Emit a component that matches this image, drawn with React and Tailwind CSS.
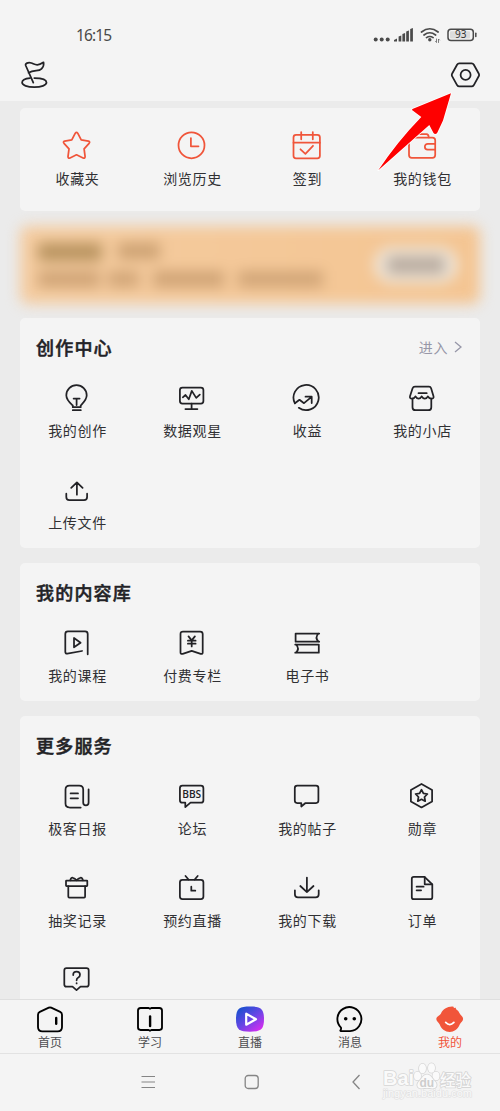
import clsx from 'clsx'

const ICONS = {
    star: <path d="M13.300 2.200q1.200-1.600 2.400 0l3.500 6.600 7.200 1.300q2 .6.7 2.200l-5 5.500 1 7.800q0 2-2 1.400l-6.600-3.200L8 27q-2 .6-2-1.400l1-7.800-5-5.500q-1.300-1.600.7-2.200L9.800 8.800z" />,
    clock: (
        <>
            <circle cx="14.500" cy="14.300" r="13" />
            <path d="M13.900 7v8.300h7.600" />
        </>
    ),
    checkin: (
        <>
            <rect x="1.500" y="3.900" width="26.400" height="23.400" rx="2.500" />
            <path d="M9.200 1v7.300M20.800 1v7.300M1.500 11.700h26.400M8.500 18.300l4.900 4.500 7.600-8" />
        </>
    ),
    wallet: (
        <>
            <path d="M28.200 12.800V9.300q0-2.800-2.800-2.800H3.500Q2 6.500 2 9v15q0 2.800 2.800 2.800h20.600q2.800 0 2.800-2.800v-5.500" />
            <path d="M28.200 12.800h-7.500a2.850 2.850 0 0 0 0 5.700h7.500zM3.500 6.500Q5 3.200 8 3.200h11.500q2 0 2.300 3.300" />
        </>
    ),
    bulb: (
        <>
            <path d="M10.800 24.200V22.500C8 20 4.300 17 4.300 12.300a10.200 10.200 0 0 1 20.400 0c0 4.700-3.700 7.700-6 10.200v1.700zM10.800 27.200h8" />
            <path d="M11.600 15.600h6M14.600 15.600V22" />
        </>
    ),
    monitor: (
        <>
            <rect x="2.900" y="4.500" width="23.500" height="16" rx="2.500" />
            <path d="M14.600 20.500V26M8.400 26h12" />
            <path d="m5.800 14.300 2.700-2.300 3.300 4.200 3-8.300 4.400 7 3.600-3.300" />
        </>
    ),
    income: (
        <>
            <path d="M2.900 20.300A12.600 12.600 0 1 1 6.800 24.800" />
            <path d="m2.900 20.300 4.600-3.500 4.500 3.400 7.600-6.400M13.500 13.700h6.200V20" />
        </>
    ),
    shop: (
        <>
            <path d="M8 3.600h14q1.600 0 2.100 1.600l2.400 8q.6 2.500-2 2.500-2.500 0-3.600-2.300-1.200 2.300-3.100 2.300T14.700 13.400q-1.200 2.300-3.100 2.300T8.500 13.400Q7.300 15.700 5 15.700q-2.600 0-2-2.500l2.600-8Q6.200 3.600 8 3.600z" />
            <path d="M5.500 15.700v8.500q0 3 3 3h12.800q3 0 3-3v-8.500M11.500 10.200h8.200" />
        </>
    ),
    upload: <path d="M14.900 19.700V7.500M9.200 12.800l5.700-5.500 5.700 5.500M4.300 18.700v3.400q0 3.100 3.100 3.100H22q3.100 0 3.100-3.100v-3.400" />,
    course: (
        <>
            <path d="M25.700 26.300V6q0-2.600-2.600-2.600H5.900q-2.600 0-2.600 2.600v17.800q0 2 2 1.800L20 23" />
            <path d="M12 10v9.300l6.600-4.600z" />
        </>
    ),
    column: (
        <>
            <path d="M6 3.500h17.200q2.500 0 2.500 2.500v18.500q0 2-2 1.300l-9-3-9 3q-2.200.7-2.200-1.300V6Q3.500 3.500 6 3.500z" />
            <path d="m11.500 8.400 3.200 4 3.200-4M14.700 12.400v6M10.900 12.700h7.700M10.900 15.700h7.700" />
        </>
    ),
    ebook: (
        <>
            <path d="M27.200 5.500H3.600v8.200h23.600M26.500 5.500q-4 4 0 8.200" />
            <path d="M3.200 16.500h23.600v8.200H3.200M4 16.500q4 4.100 0 8.200" />
        </>
    ),
    daily: (
        <>
            <path d="M18.700 26.500H7.500q-4-.2-4-4V8.500q0-4 4-4h9.700q4 0 4 4v13q0 2.900 2.700 2.900t2.700-2.900V8.300" />
            <path d="M8.600 12.400h7.400M8.600 17.300h7.400" />
        </>
    ),
    forum: (
        <>
            <path d="M5.400 4.700h18.500q2.500 0 2.500 2.500v12q0 2.500-2.500 2.500H13.500l-5.200 4.400v-4.400H5.400q-2.500 0-2.500-2.500v-12q0-2.500 2.500-2.500z" />
            <text x="5.200" y="17.300" textLength="19" lengthAdjust="spacingAndGlyphs" fontSize="11" fontWeight="600" fontFamily="Open Sans, sans-serif" fill="currentColor" stroke="none">BBS</text>
        </>
    ),
    post: <path d="M5.200 4.500H24q2.400 0 2.400 2.400v12.700q0 2.400-2.400 2.400H13.500l-4.200 3.500V22H5.200q-2.400 0-2.400-2.400V6.900q0-2.400 2.400-2.400z" />,
    medal: (
        <>
            <path d="m14.500 3 10.600 5.900v11.600l-10.600 5.900L3.900 20.500V8.900z" />
            <path d="m14.500 8.700 1.900 3.700 4 .6-2.900 3 .7 4.200-3.700-1.900-3.700 1.900.7-4.200-2.900-3 4-.6z" />
        </>
    ),
    gift: (
        <>
            <rect x="4" y="7.600" width="21.300" height="5.400" rx="0.500" />
            <path d="M6.300 13v10.500q0 1 1 1h14.800q1 0 1-1V13M8.300 7.300q.7-3 2.600-2.500 2 .4 3.700 2.500 1.700-2.100 3.700-2.500 1.900-.5 2.600 2.500" />
        </>
    ),
    tv: (
        <>
            <rect x="2.900" y="6.800" width="23.500" height="19.300" rx="2.500" />
            <path d="m8.500 3 3 3.500M20.700 3l-3 3.500M14.300 13.700v4h4" />
        </>
    ),
    download: <path d="M14.900 4.500V19M8.300 13l6.600 6.200 6.600-6.200M2.900 17.300v3.900q0 3.100 3.100 3.100h17.600q3.100 0 3.100-3.100v-3.900" />,
    order: (
        <>
            <path d="M17.500 3.800H6.800q-2 0-2 2v18.400q0 2 2 2h16.500q2 0 2-2V11.400z" />
            <path d="M17.700 4v7.300h7.500M9.600 13.700h7M9.600 17.300h4.500" />
        </>
    ),
    help: (
        <>
            <path d="M4.500 3.200h20q2.200 0 2.200 2.200v14q0 2.200-2.200 2.200h-6l-4 3.500-4-3.500h-6q-2.200 0-2.200-2.200v-14q0-2.200 2.200-2.200z" />
            <path d="M11.200 10q0-3.300 3.400-3.300T18 9.700q0 1.800-1.700 2.900-1.700 1-1.700 2.700M14.600 18v.4" />
        </>
    ),
}

const SHORTCUTS = [
    { icon: 'star', label: '收藏夹' },
    { icon: 'clock', label: '浏览历史' },
    { icon: 'checkin', label: '签到' },
    { icon: 'wallet', label: '我的钱包' },
]

const SECTIONS = [
    {
        title: '创作中心',
        more: '进入',
        items: [
            { icon: 'bulb', label: '我的创作' },
            { icon: 'monitor', label: '数据观星' },
            { icon: 'income', label: '收益' },
            { icon: 'shop', label: '我的小店' },
            { icon: 'upload', label: '上传文件' },
        ],
    },
    {
        title: '我的内容库',
        items: [
            { icon: 'course', label: '我的课程' },
            { icon: 'column', label: '付费专栏' },
            { icon: 'ebook', label: '电子书' },
        ],
    },
    {
        title: '更多服务',
        items: [
            { icon: 'daily', label: '极客日报' },
            { icon: 'forum', label: '论坛' },
            { icon: 'post', label: '我的帖子' },
            { icon: 'medal', label: '勋章' },
            { icon: 'gift', label: '抽奖记录' },
            { icon: 'tv', label: '预约直播' },
            { icon: 'download', label: '我的下载' },
            { icon: 'order', label: '订单' },
            { icon: 'help', label: '' },
        ],
    },
]

const TABS = [
    {
        label: '首页',
        icon: (
            <>
                <path d="M13.800 3.700 4.800 7.900Q3 8.800 3 10.800V23q0 4.400 4.400 4.400h15.200q4.400 0 4.400-4.400V10.800q0-2-1.800-2.900l-9-4.200q-1.200-.5-2.400 0z" />
                <path d="M21.200 14v5.700" strokeWidth="2.400" />
            </>
        ),
    },
    {
        label: '学习',
        icon: (
            <>
                <path d="M5.600 4h8l1.400.8 1.400-.8h8q2.600 0 2.600 2.600v17q0 2.400-2.600 2.400h-8l-1.400.8-1.400-.8h-8Q3 26 3 23.600v-17Q3 4 5.600 4z" />
                <path d="M15.100 12.500v9.500" strokeWidth="2.400" />
            </>
        ),
    },
    {
        label: '直播',
        icon: (
            <>
                <defs>
                    <linearGradient id="live" x1="0.100" y1="0.100" x2="0.850" y2="1">
                        <stop offset="0" stopColor="#1b50cf" />
                        <stop offset="0.500" stopColor="#6a45e6" />
                        <stop offset="1" stopColor="#dd2bf0" />
                    </linearGradient>
                </defs>
                <path d="M15 2.500c10.500 0 14 1.800 14 12.600s-3.500 12.600-14 12.600S1 26 1 15.100 4.500 2.500 15 2.500z" fill="url(#live)" stroke="none" />
                <path d="M11.200 9.700v11l9.800-5.500z" stroke="#fff" strokeWidth="2.200" />
            </>
        ),
    },
    {
        label: '消息',
        icon: (
            <>
                <path d="M6 23.700A12 12 0 1 1 15 27.100H5.800q-.8-.2-.3-.9.800-1 .5-2.500z" />
                <circle cx="10.700" cy="14.700" r="1.800" fill="currentColor" stroke="none" />
                <circle cx="19.300" cy="14.700" r="1.800" fill="currentColor" stroke="none" />
            </>
        ),
    },
    {
        label: '我的',
        active: true,
        icon: (
            <>
                <path d="M6 9.500C7.500 5.200 12.500 2.200 17.500 2.400l1.500.5-.5 1.200 2.500-.3-.2 1.200q3 1.800 3.900 4.500c1.200 2 3.400 3.200 3.400 5.500s-2.300 3.200-3.400 5.500C22.800 25.200 19 28 14.700 28S6.500 25.200 4.700 20.500C3.600 18.200 1.300 17.300 1.300 15S4.800 11.500 6 9.500z" fill="currentColor" stroke="none" />
                <path d="M10.700 18.400q4 4.400 8.200 0" stroke="#fff" strokeWidth="1.800" />
            </>
        ),
    },
]

function LineIcon({ children, className }) {
    return (
        <svg
            viewBox="0 0 30 30"
            className={clsx('w-[30px] h-[30px] shrink-0', className)}
            fill="none"
            stroke="currentColor"
            strokeWidth="1.750"
            strokeLinecap="round"
            strokeLinejoin="round"
        >
            {children}
        </svg>
    )
}

function IconGrid({ items, iconClass }) {
    return (
        <div className="grid grid-cols-4 gap-y-[34px]">
            {items.map((item) => (
                <div key={item.icon} className="flex flex-col items-center">
                    <LineIcon className={clsx('mr-px', iconClass)}>{ICONS[item.icon]}</LineIcon>
                    <span className="mt-[7px] mb-px h-5 text-[14px] leading-5 tracking-[0.65px] text-[#303033] whitespace-nowrap">
                        {item.label}
                    </span>
                </div>
            ))}
        </div>
    )
}

function Section({ title, more, items }) {
    return (
        <section className="mt-[15px] rounded-[5px] bg-[#f4f4f4] pt-[15px] pb-[15px]">
            <div className="flex items-center justify-between h-7 pl-4 pr-[18px] mb-[22px]">
                <h2 className="text-[18px] leading-7 tracking-[1.2px] font-medium [-webkit-text-stroke:0.5px_#222226] text-[#222226]">{title}</h2>
                {more && (
                    <span className="flex items-center gap-1.5 text-[14px] tracking-[0.6px] text-[#9797a8]">
                        {more}
                        <svg viewBox="0 0 8 12" className="w-2 h-3" fill="none" stroke="currentColor" strokeWidth="1.300">
                            <path d="m1 1 6 5-6 5" />
                        </svg>
                    </span>
                )}
            </div>
            <IconGrid items={items} iconClass="text-[#222226]" />
        </section>
    )
}

function StatusBar() {
    return (
        <div className="flex items-center justify-between h-[50px] pt-5 pl-[76px] pr-[22px]">
            <span className="font-['Noto_Sans'] text-[15.5px] leading-[30px] tracking-[-0.9px] text-[#4a4a4a]">16:15</span>
            <svg viewBox="0 0 106 20" className="w-[106px] h-5" fill="none" stroke="#4a4a4a" strokeLinecap="round">
                <g fill="#4a4a4a" stroke="none">
                    <circle cx="3.700" cy="14.500" r="2" />
                    <circle cx="9.700" cy="14.500" r="2" />
                    <circle cx="15.700" cy="14.500" r="2" />
                    <path d="M22 16.400v-1.500l3-1.500v3zM26.600 16.400v-5l2.700-1v6zM30.400 16.400V9l2.700-1v8.400zM34.200 16.400V6.500l2.700-1v10.900zM38.200 16.400V4l2.700-1v13.400z" />
                    <circle cx="57.800" cy="14.700" r="1.700" />
                </g>
                <path d="M49.500 7q8.300-6.500 16.600 0M52 10q5.800-4.500 11.600 0M54.500 12.600q3.300-2.200 6.600 0" strokeWidth="1.700" />
                <path d="M64.500 14v3.500l-1-1M66.500 17.500V14l1 1" strokeWidth="0.700" />
                <rect x="76" y="4.200" width="25.300" height="11.400" rx="3" strokeWidth="1.500" />
                <rect x="78" y="6.200" width="20" height="7.400" rx="1" fill="#dcdcdc" stroke="none" />
                <path d="M103.800 8.300v3.200" strokeWidth="1.500" />
                <text x="88.700" y="13.400" textAnchor="middle" fontSize="10" fontFamily="Noto Sans, sans-serif" fill="#333" stroke="none">93</text>
            </svg>
        </div>
    )
}

function Header() {
    return (
        <header className="h-[101px] bg-[#f4f4f4] shrink-0">
            <StatusBar />
            <div className="flex items-center justify-between h-[50px] px-5 text-[#222226]">
                <LineIcon>
                    <path d="M10 18.100C5.500 18.500 2.100 20.300 2.100 22.500c0 2.700 5.200 4.700 12.200 4.700s12.200-2 12.200-4.700-4.700-4.400-12.200-4.400" />
                    <path d="M13.300 22.600 5.700 5.500C5 3.500 8 2 11.300 3c4 1.400 5.500 3.500 12.200-.7q.8 3.700-2 6.500c-3 3-7 .7-13 4" />
                </LineIcon>
                <LineIcon>
                    <path d="M8.700 3h12.500q1.300 0 2 1.100l5 9q.8 1.400 0 2.800l-5 9q-.7 1.100-2 1.100H8.700q-1.300 0-2-1.100l-5-9q-.8-1.400 0-2.800l5-9q.7-1.100 2-1.100z" transform="translate(0.500 .4)" />
                    <circle cx="15.600" cy="14.900" r="5" />
                </LineIcon>
            </div>
        </header>
    )
}

// Membership banner, kept unreadable on purpose
function BlurredBanner() {
    return (
        <div className="mt-[15px] mb-[-1px] h-[78px] rounded-lg bg-linear-to-r from-[#f4cb9f] to-[#f4c592] blur-[7px] flex items-center justify-between pl-[18px] pr-[22px]">
            <div className="space-y-2.5">
                <div className="flex gap-4">
                    <div className="w-[64px] h-[18px] bg-[#b8935f]" />
                    <div className="w-[42px] h-4 bg-[#cca172]" />
                </div>
                <div className="flex gap-2">
                    <div className="w-[62px] h-4 bg-[#cfa375]" />
                    <div className="w-[31px] h-4 bg-[#d1a577]" />
                    <div className="w-[71px] h-4 ml-1.5 bg-[#cfa375]" />
                    <div className="w-[85px] h-4 ml-1.5 bg-[#d1a577]" />
                </div>
            </div>
            <div className="flex items-center justify-center w-[84px] h-9 rounded-full bg-[#f0e6d9]">
                <div className="w-[58px] h-[18px] bg-[#b9aca0]" />
            </div>
        </div>
    )
}

function TabBar() {
    return (
        <nav className="grid grid-cols-5 h-[54px] shrink-0 bg-[#f4f4f4] border-t border-[#dfdfdf] pt-1">
            {TABS.map((tab) => (
                <div
                    key={tab.label}
                    className={clsx('flex flex-col items-center', tab.active ? 'text-[#f1553a]' : 'text-black')}
                >
                    <svg viewBox="0 0 30 30" className="w-[30px] h-[30px]" fill="none" stroke="currentColor" strokeWidth="1.850" strokeLinecap="round" strokeLinejoin="round">
                        {tab.icon}
                    </svg>
                    <span className={clsx('text-[12px] leading-4', !tab.active && 'text-[#4d4d50]')}>{tab.label}</span>
                </div>
            ))}
        </nav>
    )
}

function SystemNav() {
    return (
        <div className="flex items-center justify-between h-[58px] shrink-0 bg-[#f4f4f4] border-t border-[#e2e2e2] pb-px pl-[140px] pr-[136px] text-[#858585]">
            <svg viewBox="0 0 16 16" className="w-4 h-4" fill="none" stroke="currentColor" strokeWidth="1.200">
                <path d="M1.500 2.500h13.500M1.500 8h13.500M1.500 13.500h13.500" />
            </svg>
            <svg viewBox="0 0 16 16" className="w-4 h-4" fill="none" stroke="currentColor" strokeWidth="1.300">
                <rect x="1.200" y="1.500" width="13" height="13" rx="3" />
            </svg>
            <svg viewBox="0 0 16 16" className="w-4 h-4" fill="none" stroke="currentColor" strokeWidth="1.300">
                <path d="M11.500 1 5 8l6.500 7" />
            </svg>
        </div>
    )
}

function Watermark() {
    return (
        <svg viewBox="0 0 96 46" className="absolute left-[380px] top-[1055px] w-24 h-[46px]" fill="#fafafa" stroke="#d6d6d6" strokeWidth="1.600" paintOrder="stroke" strokeLinejoin="round">
            <text x="3" y="30" fontSize="20" fontWeight="bold" fontFamily="Liberation Sans, sans-serif" textLength="31" lengthAdjust="spacingAndGlyphs">Bai</text>
            <ellipse cx="37.500" cy="21" rx="3.500" ry="4.300" />
            <ellipse cx="42.500" cy="13.500" rx="3.500" ry="4.800" />
            <ellipse cx="51.500" cy="13" rx="3.500" ry="4.800" />
            <ellipse cx="56" cy="21" rx="3.500" ry="4.300" />
            <path d="M47 19.500c4 0 5 4 8 7 3 3 1.800 7.500-3 7-2.500-.6-7.500-.6-10 0-4.800.5-6-4-3-7s4-7 8-7z" />
            <text x="39.500" y="32" fontSize="12" fontWeight="bold" fontFamily="Liberation Sans, sans-serif" fill="#cdcdcd" stroke="none">du</text>
            <text x="60" y="31" fontSize="15.500" fontWeight="500" fontFamily="Noto Sans CJK SC, sans-serif" textLength="31" strokeWidth="1.800">经验</text>
            <text x="3" y="42" fontSize="10" fontFamily="Liberation Sans, sans-serif" textLength="89" lengthAdjust="spacingAndGlyphs" stroke="#e0e0e0" strokeWidth="1.200">jingyan.baidu.com</text>
        </svg>
    )
}

export default function App() {
    return (
        <div className="relative flex flex-col w-[500px] h-[1111px] overflow-hidden bg-[#ebebeb] font-['Noto_Sans_CJK_SC',sans-serif]">
            <Header />
            <main className="flex-1 min-h-0 overflow-hidden px-5 pt-[7px]">
                <section className="rounded-[5px] bg-[#f4f4f4] pt-[23px] pb-[22px]">
                    <IconGrid items={SHORTCUTS} iconClass="text-[#f0553a]" />
                </section>
                <BlurredBanner />
                {SECTIONS.map((section) => (
                    <Section key={section.title} {...section} />
                ))}
            </main>
            <TabBar />
            <SystemNav />
            <Watermark />

            {/* Pointer to the settings button */}
            <svg viewBox="0 0 80 84" className="absolute left-[375px] top-[90px] w-20 h-[84px]">
                <path
                    d="M76 3.300 38 18.700q-2 1 0 2L46.300 27Q22 52 3.300 80.300L54.300 35l4.200 8q1.500 1.800 3.500.3Q65.500 36 68 30.500z"
                    fill="#fe0000"
                    stroke="#fff"
                    strokeWidth="1.600"
                    strokeLinejoin="round"
                    paintOrder="stroke"
                />
            </svg>
        </div>
    )
}
